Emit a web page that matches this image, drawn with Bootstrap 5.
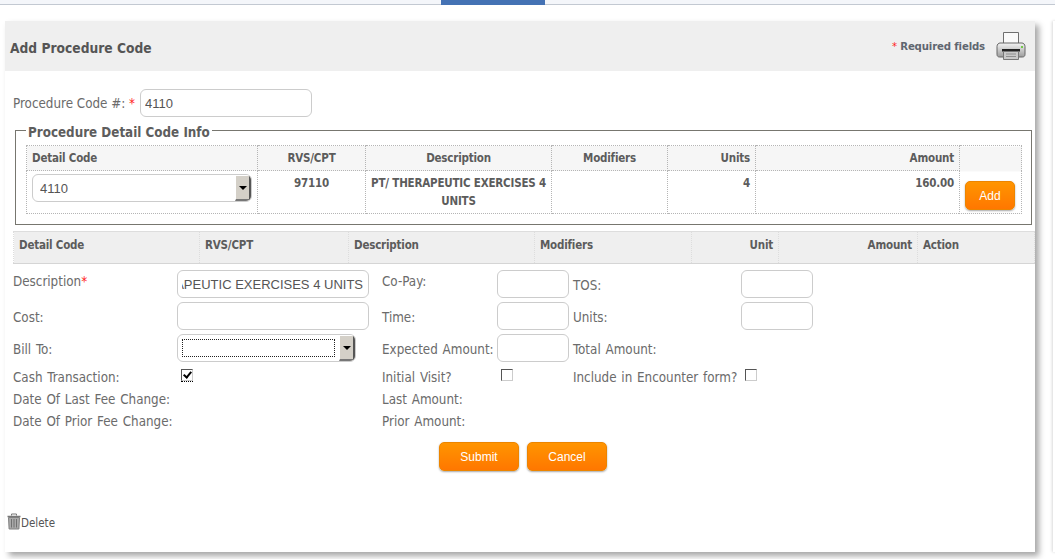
<!doctype html>
<html lang="en">
<head>
<meta charset="utf-8">
<title>Add Procedure Code</title>
<link href="https://cdn.jsdelivr.net/npm/bootstrap@5.3.0/dist/css/bootstrap.min.css" rel="stylesheet">
<style>
html,body{height:559px;overflow:hidden;}
body{background:#fff;font-family:"DejaVu Sans Condensed","DejaVu Sans",sans-serif;font-size:13.3px;color:#6b6b6b;line-height:16px;}
.topstrip{height:5px;background:#f4f6fa;border-bottom:1px solid #c3c9d2;padding-left:441px;}
.toptab{width:104px;height:5px;background:#4472b4;}
.pagebody{padding:16px 0 0 5px;gap:18px;}
.sheet{width:1030px;height:531px;background:#fff;box-shadow:4px 4px 6px rgba(0,0,0,.35);}
.sliver{width:10px;height:531px;background:#fff;box-shadow:-1px 0 3px rgba(0,0,0,.15);}
.sheethead{height:50px;background:#efefef;padding:0 8px 0 5px;}
.sheettitle{font-size:13.7px;font-weight:700;color:#555;margin:4px 0 0;}
.reqnote{font-size:11.3px;letter-spacing:-.15px;font-weight:700;color:#5f6670;margin-right:10px;margin-top:2px;}
.star{color:#f22;font-weight:400;}
.codeline{padding:18px 0 0 8px;height:59px;}
.codeline label{width:127px;padding-top:7px;line-height:16px;white-space:nowrap;}
.fld{display:block;height:28px;border:1px solid #ccc;border-radius:6px;background:#fff;padding:0 4px;font:13px/26px "Liberation Sans",Arial,sans-serif;color:#555;outline:0;}
.fldcode{width:172px;}
.fldwide{width:192px;}
.fldsmall{width:72px;}
.rtlval{direction:rtl;text-align:right;padding-right:5px;}
.dropwrap{height:28px;border:1px solid #ccc;border-radius:6px;background:#fff;overflow:hidden;}
.dropwrap select{appearance:none;border:0;background:transparent;flex:1 1 auto;min-width:0;height:26px;padding:0 7px;font:13px "Liberation Sans",Arial,sans-serif;color:#555;outline:0;}
.dropbtn{width:16px;height:26px;background:#d4d0c8;border-right:2px solid #555;border-bottom:2px solid #777;border-left:1px solid #fff;border-top:1px solid #fff;}
.droparrow{width:0;height:0;border:4px solid transparent;border-top:4px solid #000;border-bottom:0;}
.focusdots{display:block;flex:1 1 auto;height:18px;margin:0 4px;border:1px dotted #222;}
.billdrop{width:179px;}
.infoset{margin:0 3px 0 10px;height:95px;border:1px solid #77766f;box-shadow:inset 1px 1px 0 #fff;padding:14px 9px 0 10px;position:relative;}
.infolegend{position:absolute;left:10px;top:-5px;background:#fff;padding:0 2px;font-size:13.3px;line-height:14px;font-weight:700;color:#5d5d5d;margin:0;float:none;width:auto;}
.gridtbl{table-layout:fixed;border-collapse:collapse;width:995px;font-weight:700;font-size:11.5px;letter-spacing:-.2px;color:#5c5c5c;}
.gridtbl th,.gridtbl td{border:1px dotted #b5b5b5;padding:3px 5px 2px;vertical-align:top;line-height:18px;}
.gridtbl th{background:#f6f6f6;height:25px;font-weight:700;vertical-align:middle;padding:2px 5px;}
.gridtbl td{height:43px;}
.gridtbl .dropwrap{font-weight:400;margin-top:0;letter-spacing:0;}
.gridtbl .addcell{padding:0 0 3px;vertical-align:bottom;background:linear-gradient(#f6f6f6 25px,#fff 25px);}
.dtlhead{width:1021px;margin:6px 0 0 8px;table-layout:fixed;border-collapse:collapse;font-weight:700;font-size:11.5px;letter-spacing:-.2px;color:#5c5c5c;}
.dtlhead th{background:#efefef;height:32px;padding:0 5px 5px;border:1px dotted #ddd;border-top:1px solid #ddd;border-bottom:1px solid #d5d5d5;font-weight:700;}
.orangebtn{background:linear-gradient(#ff9500,#ff7700);border:1px solid #ec8500;border-radius:5px;color:#fff;font:12px "Liberation Sans",Arial,sans-serif;box-shadow:0 1px 2px rgba(0,0,0,.35);padding:0;}
.orangebtn:hover{color:#fff;background:#ff8a00;}
.btnadd{width:50px;height:29px;margin:0 1px 0 0;}
.btnmain{width:80px;height:29px;}
.formgrid{display:grid;grid-template-columns:164px 205px 115px 76px 168px 72px;grid-template-rows:32px 32px 32px;grid-auto-rows:22px;margin:4px 0 0 8px;align-items:center;}
.formgrid label{margin:0;padding-top:4px;word-spacing:1px;}
.formgrid .rowtight label{padding-top:6px;}
.rowtight{grid-column:1/-1;display:grid;grid-template-columns:164px 205px 115px 76px 168px 72px;height:22px;align-items:center;}
.lblhigh{align-self:start;margin-top:2px!important;}
.tick{appearance:none;width:12px;height:12px;border:1px solid #555;border-right-color:#ccc;border-bottom-color:#ccc;background:#fff;display:block;margin:0 0 0 4px;position:relative;}
.tick:checked::after{content:"";position:absolute;left:3px;top:0;width:5px;height:8px;border:solid #000;border-width:0 2px 2px 0;transform:rotate(40deg);}
.tick:checked::before{content:"";position:absolute;left:-1px;right:-1px;bottom:-2px;border-bottom:1px dotted #000;}
.btnline{margin-top:12px;padding-left:434px;gap:8px;}
.delline{margin:42px 0 0 2px;}
.delline a{color:#555;text-decoration:none;font-size:11.5px;line-height:18px;}
.delline svg{margin-bottom:2px;}
</style>
</head>
<body>
<div class="topstrip"><div class="toptab"></div></div>
<div class="pagebody d-flex">
  <div class="sheet flex-shrink-0">
    <div class="sheethead d-flex align-items-center justify-content-between">
      <h1 class="sheettitle">Add Procedure Code</h1>
      <div class="d-flex align-items-center">
        <span class="reqnote"><span class="star">*</span> Required fields</span>
        <svg width="32" height="30" viewBox="0 0 32 30">
          <defs><linearGradient id="pb" x1="0" y1="0" x2="0" y2="1"><stop offset="0" stop-color="#f4f4f4"/><stop offset="1" stop-color="#9c9c9c"/></linearGradient></defs>
          <path d="M8.500 1.500h15v11h-15z" fill="#fafafa" stroke="#6f6f6f"/>
          <path d="M5 12h22c1.500 0 3 1.500 3 3.500v8c0 1.500-1 2.500-2.500 2.500h-23C3 26 2 25 2 23.500v-8C2 13.500 3.500 12 5 12z" fill="url(#pb)" stroke="#666"/>
          <rect x="7" y="18" width="18" height="2.500" fill="#222"/>
          <path d="M8.500 20.500h15v8h-15z" fill="#c9c9c9" stroke="#777"/>
          <path d="M11 23h10M11 25.500h10" stroke="#8f8f8f"/>
          <circle cx="27" cy="16" r="1" fill="#52c41a"/>
        </svg>
      </div>
    </div>
    <div class="codeline d-flex align-items-start">
      <label for="pcode">Procedure Code #: <span class="star">*</span></label>
      <input id="pcode" class="fld fldcode" value="4110">
    </div>
    <fieldset class="infoset">
      <legend class="infolegend">Procedure Detail Code Info</legend>
      <table class="gridtbl">
        <colgroup><col style="width:231px"><col style="width:108px"><col style="width:186px"><col style="width:116px"><col style="width:88px"><col style="width:204px"><col style="width:62px"></colgroup>
        <tr><th>Detail Code</th><th class="text-center">RVS/CPT</th><th class="text-center">Description</th><th class="text-center">Modifiers</th><th class="text-end">Units</th><th class="text-end">Amount</th><th rowspan="2" class="addcell"><div class="text-center"><button type="button" class="btn orangebtn btnadd">Add</button></div></th></tr>
        <tr>
          <td><div class="dropwrap d-flex"><select aria-label="Detail Code"><option>4110</option></select><span class="dropbtn d-flex align-items-center justify-content-center"><span class="droparrow"></span></span></div></td>
          <td class="text-center">97110</td>
          <td class="text-center">PT/ THERAPEUTIC EXERCISES 4 UNITS</td>
          <td></td>
          <td class="text-end">4</td>
          <td class="text-end">160.00</td>
        </tr>
      </table>
    </fieldset>
    <table class="dtlhead">
      <colgroup><col style="width:186px"><col style="width:149px"><col style="width:186px"><col style="width:157px"><col style="width:87px"><col style="width:139px"><col style="width:117px"></colgroup>
      <tr><th>Detail Code</th><th>RVS/CPT</th><th>Description</th><th>Modifiers</th><th class="text-end">Unit</th><th class="text-end">Amount</th><th>Action</th></tr>
    </table>
    <div class="formgrid">
      <label class="lblhigh">Description<span class="star">*</span></label>
      <input class="fld fldwide rtlval" value="PT/ THERAPEUTIC EXERCISES 4 UNITS" aria-label="Description">
      <label class="lblhigh">Co-Pay:</label>
      <input class="fld fldsmall" aria-label="Co-Pay">
      <label>TOS:</label>
      <input class="fld fldsmall" aria-label="TOS">

      <label>Cost:</label>
      <input class="fld fldwide" aria-label="Cost">
      <label>Time:</label>
      <input class="fld fldsmall" aria-label="Time">
      <label>Units:</label>
      <input class="fld fldsmall" aria-label="Units">

      <label>Bill To:</label>
      <div class="dropwrap d-flex align-items-center billdrop"><span class="focusdots"></span><span class="dropbtn d-flex align-items-center justify-content-center flex-shrink-0"><span class="droparrow"></span></span></div>
      <label>Expected Amount:</label>
      <input class="fld fldsmall" aria-label="Expected Amount">
      <label>Total Amount:</label>
      <span></span>

      <div class="rowtight">
        <label>Cash Transaction:</label>
        <div><input type="checkbox" class="tick" checked aria-label="Cash Transaction"></div>
        <label>Initial Visit?</label>
        <div><input type="checkbox" class="tick" aria-label="Initial Visit"></div>
        <label class="text-nowrap">Include in Encounter form?</label>
        <div><input type="checkbox" class="tick" aria-label="Include in Encounter form"></div>
      </div>
      <div class="rowtight">
        <label>Date Of Last Fee Change:</label><span></span><label>Last Amount:</label>
      </div>
      <div class="rowtight">
        <label class="text-nowrap">Date Of Prior Fee Change:</label><span></span><label>Prior Amount:</label>
      </div>
    </div>
    <div class="btnline d-flex">
      <button type="button" class="btn orangebtn btnmain">Submit</button>
      <button type="button" class="btn orangebtn btnmain">Cancel</button>
    </div>
    <div class="delline">
      <a href="#" class="d-inline-flex align-items-end">
        <svg width="14" height="17" viewBox="0 0 14 17"><path d="M4.500 2.500V1h5v1.500" stroke="#777" fill="none"/><path d="M.5 3.500h13" stroke="#777" stroke-width="1.500"/><path d="M1.500 4.500h11l-.6 11.500H2.100z" fill="#aaa" stroke="#808080"/><path d="M4.500 6v8.500M7 6v8.500M9.500 6v8.500" stroke="#707070"/></svg>Delete
      </a>
    </div>
  </div>
  <div class="sliver flex-shrink-0"></div>
</div>
<script src="https://cdn.jsdelivr.net/npm/bootstrap@5.3.0/dist/js/bootstrap.bundle.min.js"></script>
</body>
</html>
